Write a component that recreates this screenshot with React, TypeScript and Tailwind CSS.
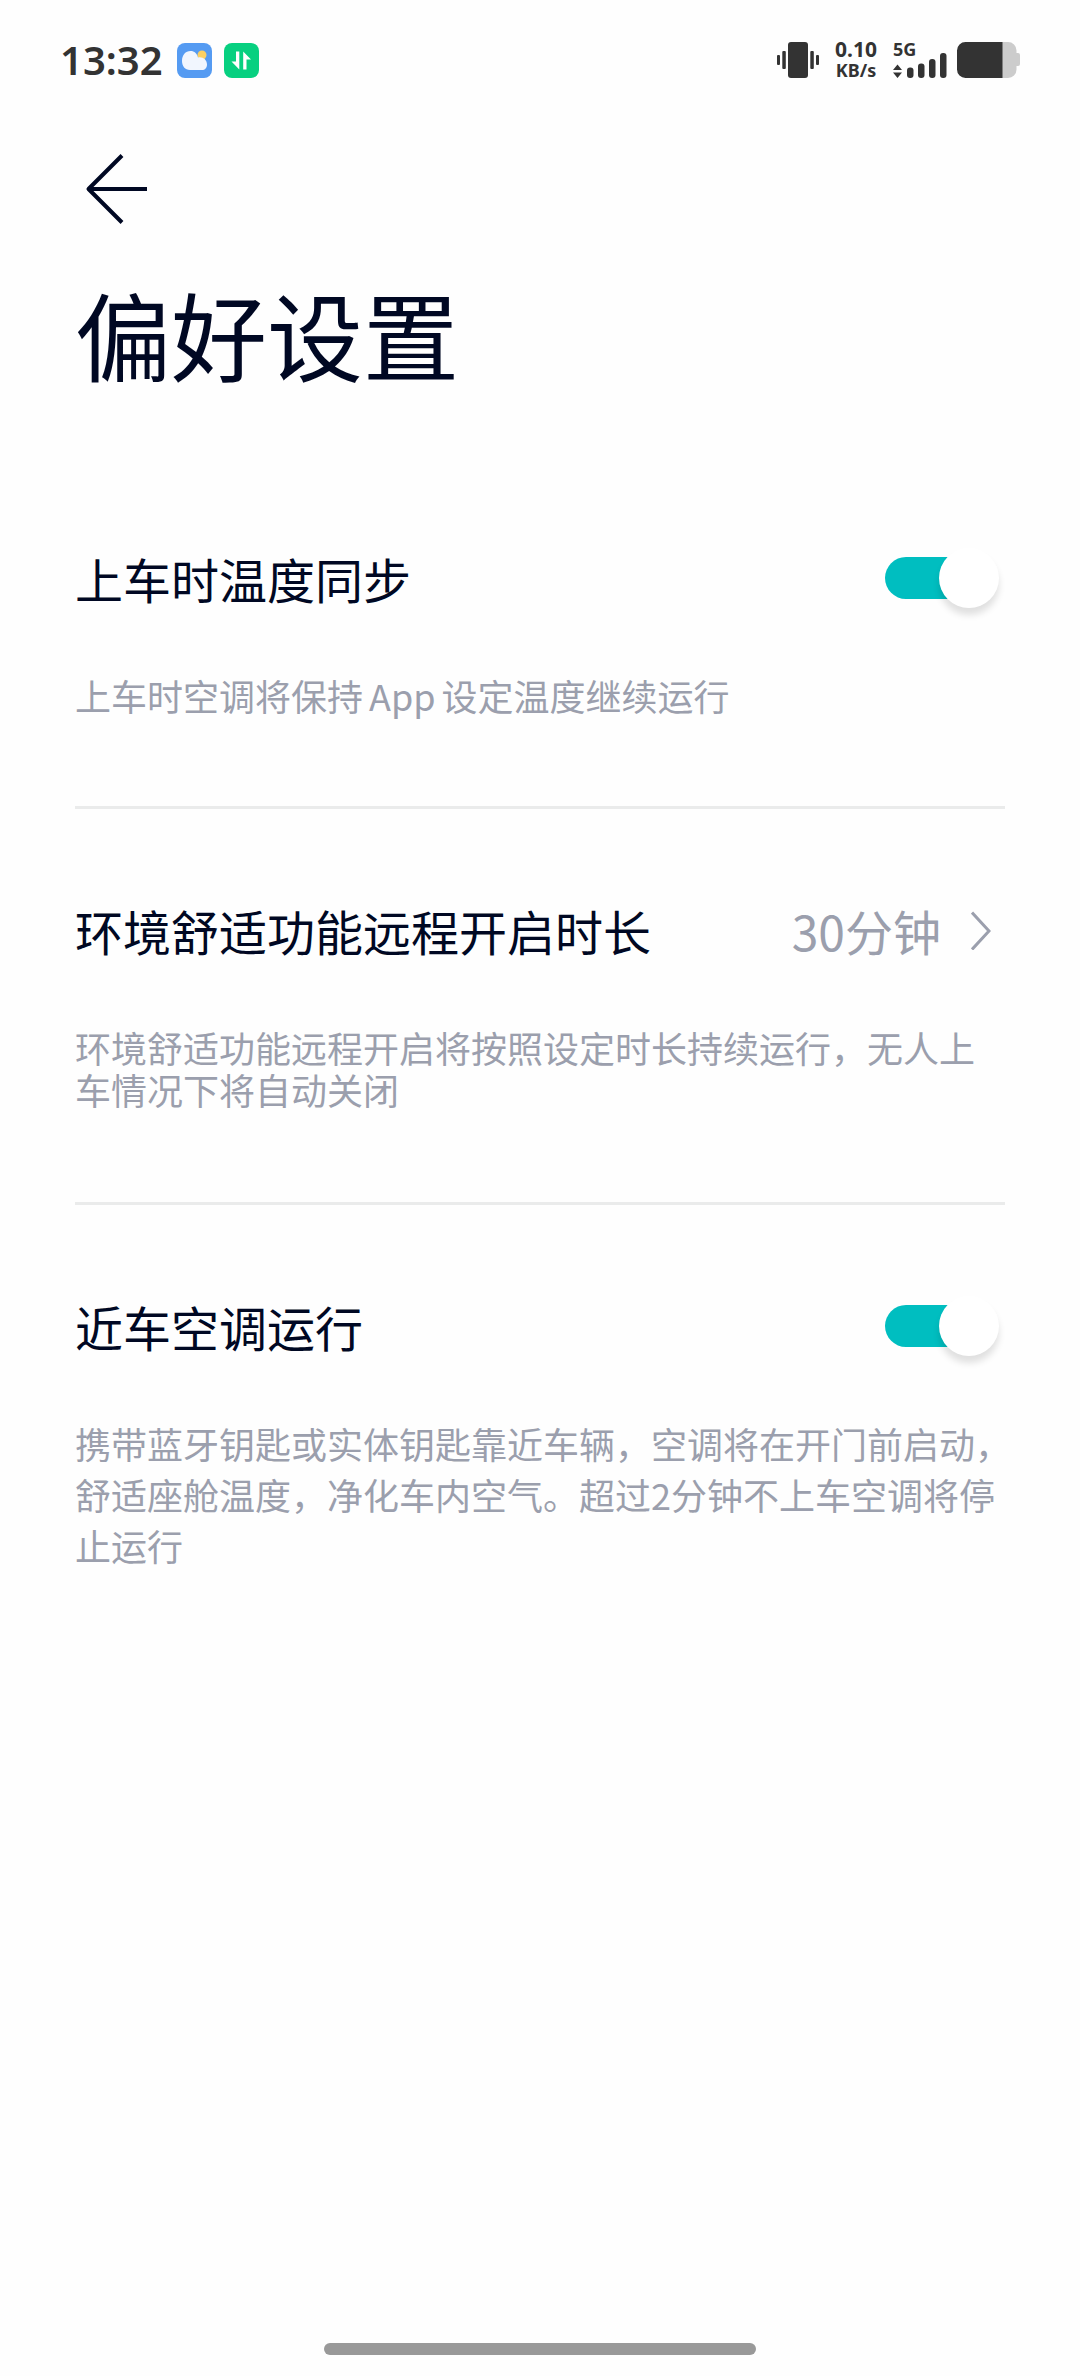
import React, { useState } from 'react';

function StatusBar() {
  return (
    <div className="flex h-[120px] items-center justify-between px-[60px] text-[#333333]">
      <div className="flex items-center gap-3">
        <span className="font-['Noto_Sans',sans-serif] text-[40px] leading-[56px] font-semibold">13:32</span>

        {/* Weather */}
        <svg className="ml-0.5 size-[35px]" viewBox="0 0 35 35" aria-hidden="true">
          <rect width="35" height="35" rx="8" fill="#559bf2" />
          <circle cx="25" cy="12" r="4.5" fill="#fbd063" />
          <path d="M13 27C8 27 5 23 5 18C5 12 8.500 8 13.500 8C17.500 8 20 10.500 21 14.500C26 13.500 30 17 30 21.500C30 25 28 27 25 27z" fill="#f1f6fe" />
        </svg>

        {/* Data transfer */}
        <svg className="size-[35px]" viewBox="0 0 35 35" aria-hidden="true">
          <rect width="35" height="35" rx="8" fill="#07d080" />
          <path d="M15.300 8.500V26.500L7.500 18.500H12V8.500z" fill="#ffffff" />
          <path d="M19.200 26.500V8.500L27 16.500H22.500V26.500z" fill="#ffffff" />
        </svg>
      </div>

      <div className="flex items-center gap-4 font-['Noto_Sans',sans-serif] font-bold">
        {/* Vibrate */}
        <svg className="h-9 w-[42px]" viewBox="0 0 42 36" fill="#333333" aria-hidden="true">
          <rect x="11" width="20" height="36" rx="3" />
          <rect x="5.300" y="9" width="3.500" height="18" rx="1" />
          <rect x="0" y="13" width="3" height="10" rx="1" />
          <rect x="33.300" y="9" width="3.500" height="18" rx="1" />
          <rect x="39" y="13" width="3" height="10" rx="1" />
        </svg>

        <div className="flex flex-col items-center leading-[21px]">
          <span className="text-[21px]">0.10</span>
          <span className="text-[18px]">KB/s</span>
        </div>

        <div className="flex items-center gap-2.5">
          <svg className="h-9 w-[54px] overflow-visible" viewBox="0 0 54 36" fill="#333333" role="img" aria-label="5G">
            <text x="0" y="14" fontSize="18">5G</text>
            <path d="M4.500 22.500 9 28H0zM0 30.500h9L4.500 36z" />
            <rect x="14" y="25.500" width="6.500" height="10.500" rx="3" />
            <rect x="25" y="21.500" width="6.500" height="14.500" rx="3" />
            <rect x="36" y="17" width="6.500" height="19" rx="3" />
            <rect x="47" y="11" width="6.500" height="25" rx="3" />
          </svg>

          <svg className="h-9 w-[63px]" viewBox="0 0 63 36" aria-hidden="true">
            <path d="M45 0h6a8.500 8.500 0 0 1 8.500 8.500V11h1.500a2 2 0 0 1 2 2v9a2 2 0 0 1-2 2h-1.500v3.500A8.500 8.500 0 0 1 51 36h-6z" fill="#cccccc" />
            <path d="M45.500 0H8.500A8.500 8.500 0 0 0 0 8.500v19A8.500 8.500 0 0 0 8.500 36h37z" fill="#333333" />
          </svg>
        </div>
      </div>
    </div>
  );
}

function Switch({ id }: { id: string }) {
  const [on, setOn] = useState(true);

  return (
    <span className="relative mr-1.5 flex h-[60px] w-[114px] shrink-0 items-center">
      <input
        id={id}
        type="checkbox"
        role="switch"
        checked={on}
        onChange={() => setOn(!on)}
        className="peer absolute inset-0 z-10 size-full cursor-pointer opacity-0"
      />
      <span className="h-[42px] w-full rounded-full bg-gray-300 peer-checked:mr-3 peer-checked:bg-[#00bec0]" />
      <span className="absolute left-0 size-[60px] rounded-full bg-white shadow-[0_7px_7px_rgba(0,0,0,0.12)] peer-checked:right-0 peer-checked:left-auto" />
    </span>
  );
}

export default function App() {
  return (
    <div className="flex min-h-screen flex-col bg-[#fefefe] font-['Noto_Sans_CJK_SC',sans-serif] text-[#000823]" lang="zh-CN">
      <StatusBar />

      <main className="px-[75px]">
        <button type="button" aria-label="返回" className="mt-[34px] ml-2.5 block">
          <svg className="h-[70px] w-16" viewBox="0 0 64 70" fill="none" stroke="#000823" strokeWidth="4" strokeLinejoin="round">
            <path d="M37 1.500 3.500 35 37 68.500M3.500 35H62" />
          </svg>
        </button>

        <h1 className="mt-[49px] mb-16 text-[96px] leading-[120px]">偏好设置</h1>

        <section className="border-b-[3px] border-[#eaebeb] pt-[89px] pb-[90px]">
          <div className="flex items-center justify-between">
            <label htmlFor="temp-sync" className="text-[48px] leading-[64px]">上车时温度同步</label>
            <Switch id="temp-sync" />
          </div>
          <p className="mt-16 text-[36px] leading-[42px] text-[#9b9fad]">
            上车时空调将保持<span className="mx-1.5">App</span>设定温度继续运行
          </p>
        </section>

        <section className="border-b-[3px] border-[#eaebeb] pt-[89px] pb-[92px]">
          <div className="flex items-center justify-between">
            <h2 className="text-[48px] leading-[64px]">环境舒适功能远程开启时长</h2>
            <button type="button" className="mr-3.5 flex items-center gap-[30px] text-[48px] leading-[64px] text-[#9b9fad]">
              30分钟
              <svg className="h-10 w-5" viewBox="0 0 20 40" fill="none" stroke="#9b9fad" strokeWidth="3" aria-hidden="true">
                <path d="M1 2.500 18 21 1 39.500" />
              </svg>
            </button>
          </div>
          <p className="mt-16 text-[36px] leading-[42px] text-[#9b9fad]">
            环境舒适功能远程开启将按照设定时长持续运行，无人上车情况下将自动关闭
          </p>
        </section>

        <section className="pt-[89px]">
          <div className="flex items-center justify-between">
            <label htmlFor="nearby-ac" className="text-[48px] leading-[64px]">近车空调运行</label>
            <Switch id="nearby-ac" />
          </div>
          <p className="mt-[60px] -mr-2 text-[36px] leading-[51px] text-[#9b9fad]">
            携带蓝牙钥匙或实体钥匙靠近车辆，空调将在开门前启动，舒适座舱温度，净化车内空气。超过2分钟不上车空调将停止运行
          </p>
        </section>
      </main>

      {/* Home indicator */}
      <div className="mt-auto mb-[21px] h-3 w-2/5 self-center rounded-full bg-[#999999]" />
    </div>
  );
}
